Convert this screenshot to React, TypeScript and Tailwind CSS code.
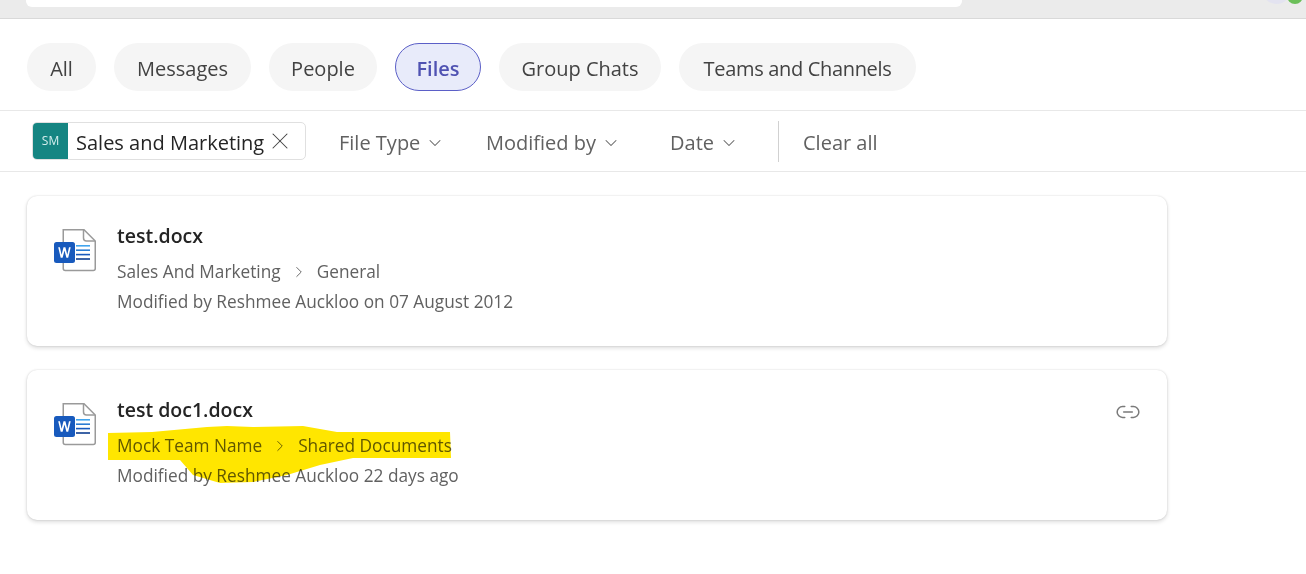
import { ChevronDown, ChevronRight, Link2, X } from 'lucide-react'

const tabs = [
  { label: 'All', width: 'w-[69px]' },
  { label: 'Messages', width: 'w-[137px]' },
  { label: 'People', width: 'w-[108px]' },
  { label: 'Files', width: 'w-[86px]', active: true },
  { label: 'Group Chats', width: 'w-[162px]' },
  { label: 'Teams and Channels', width: 'w-[237px] tracking-[-0.33px]' },
]

function WordIcon() {
  return (
    <svg width="44" height="44" viewBox="0 0 44 44" className="shrink-0">
      <path d="M9.5 0.75H30L41.25 12V39.5a2 2 0 0 1-2 2h-28a2 2 0 0 1-2-2V0.75Z" fill="#fff" stroke="#9a9a9a" strokeWidth="1.5" />
      <path d="M29.5 0.75V9a3 3 0 0 0 3 3h8.5" fill="none" stroke="#9a9a9a" strokeWidth="1.5" />
      <rect x="22" y="16" width="14" height="1.6" fill="#41a5ee" />
      <rect x="22" y="20.4" width="14" height="1.6" fill="#2b7cd3" />
      <rect x="22" y="24.8" width="14" height="1.6" fill="#185abd" />
      <rect x="22" y="29.2" width="14" height="1.6" fill="#103f91" />
      <rect x="0" y="13" width="21" height="21" rx="2.5" fill="#185abd" />
      <path d="M4.2 18.2h1.7l1.7 7.6 1.9-7.6h1.9l1.9 7.6 1.7-7.6h1.7l-2.5 10.6h-1.8l-1.9-7.4-1.9 7.4H6.7L4.2 18.2Z" fill="#fff" />
    </svg>
  )
}

function FilterButton({ label, width }: { label: string; width: string }) {
  return (
    <div className={`flex items-center gap-[5px] text-[#616161] ${width}`}>
      <span>{label}</span>
      <ChevronDown size={20} strokeWidth={1.25} />
    </div>
  )
}

function ResultCard({ name, team, channel, modified, link, children }: {
  name: string
  team: string
  channel: string
  modified: string
  link?: boolean
  children?: React.ReactNode
}) {
  return (
    <div className="relative flex h-[150px] w-[1140px] rounded-[10px] bg-white pl-[27px] pr-[26px] pt-[33px] shadow-[0_0_2px_rgba(0,0,0,0.14),0_2px_4px_rgba(0,0,0,0.14)]">
      <WordIcon />
      <div className="ml-[19px] flex-1">
        <div className="-mt-[8px] h-[30px] text-[19.5px] font-semibold leading-[30px] text-[#242424]">{name}</div>
        <div className="mt-[6px] flex h-[30px] items-center text-[17.25px] text-[#616161]">
          <span>{team}</span>
          <ChevronRight size={18} strokeWidth={1.25} className="mx-[9px]" />
          <span>{channel}</span>
        </div>
        <div className="h-[30px] text-[17.25px] leading-[30px] text-[#616161]">{modified}</div>
      </div>
      {link && <Link2 size={26} strokeWidth={1.4} className="-mt-[4px] text-[#7a7a7a]" />}
      {children}
    </div>
  )
}

export default function App() {
  return (
    <div className="h-[574px] w-[1306px] overflow-hidden bg-white font-['Open_Sans','Liberation_Sans',sans-serif]">
      {/* top bar, cut off by the crop */}
      <div className="relative h-[19px] overflow-hidden border-b border-[#d9d9d9] bg-[#ebebeb] pl-[26px]">
        <div className="h-[7px] w-[936px] rounded-b-[6px] bg-white" />
        <div className="absolute left-[1262px] top-[-25px] h-[29px] w-[29px] rounded-full bg-[#e3e3f0]" />
        <div className="absolute left-[1287px] top-[-12px] h-[16px] w-[16px] rounded-full bg-[#6bbf59]" />
      </div>

      <div className="flex h-[92px] items-start gap-[18px] border-b border-[#e8e8e8] pl-[27px] pt-[24px]">
        {tabs.map(t => (
          <div
            key={t.label}
            className={`flex h-[48px] items-center justify-center rounded-full pt-[3px] text-[20px] ${t.width} ${
              t.active
                ? 'border border-[#5b5fc7] bg-[#e8ebfa] font-semibold text-[#4f52b2]'
                : 'bg-[#f5f5f5] text-[#424242]'
            }`}
          >
            {t.label}
          </div>
        ))}
      </div>

      <div className="flex h-[61px] items-center border-b border-[#e8e8e8] pl-[32px] text-[20px]">
        <div className="flex h-[38px] w-[274px] items-center overflow-hidden rounded-[5px] border border-[#e0e0e0]">
          <div className="flex h-full w-[35px] items-center justify-center bg-[#158582] text-[12px] text-[#d5eeee]">SM</div>
          <span className="ml-[8px] pt-[3px] text-[#242424]">Sales and Marketing</span>
          <X size={28} strokeWidth={0.9} className="ml-[2px] text-[#424242]" />
        </div>
        <div className="ml-[33px] flex items-center pt-[3px]">
          <FilterButton label="File Type" width="w-[147px]" />
          <FilterButton label="Modified by" width="w-[184px]" />
          <FilterButton label="Date" width="w-[108px]" />
        </div>
        <div className="h-[41px] w-px bg-[#d1d1d1]" />
        <span className="ml-[24px] pt-[3px] text-[#616161]">Clear all</span>
      </div>

      <div className="flex flex-col gap-[24px] pl-[27px] pt-[24px]">
        <ResultCard
          name="test.docx"
          team="Sales And Marketing"
          channel="General"
          modified="Modified by Reshmee Auckloo on 07 August 2012"
        />
        <ResultCard
          name="test doc1.docx"
          team="Mock Team Name"
          channel="Shared Documents"
          modified="Modified by Reshmee Auckloo 22 days ago"
          link
        >
          {/* marker scribble over the location line */}
          <svg width="350" height="64" viewBox="0 0 350 64" className="pointer-events-none absolute left-[80px] top-[54px] mix-blend-multiply">
            <path
              d="M1 9 L45 8 L100 3 L120 2 L146 3 L196 2 L230 8 L343 8 L344 34 L246 34 L213 41 L180 51 L146 58 L113 59 L86 51 L73 36 L1 36 Z"
              fill="#ffe600"
            />
          </svg>
        </ResultCard>
      </div>
    </div>
  )
}
